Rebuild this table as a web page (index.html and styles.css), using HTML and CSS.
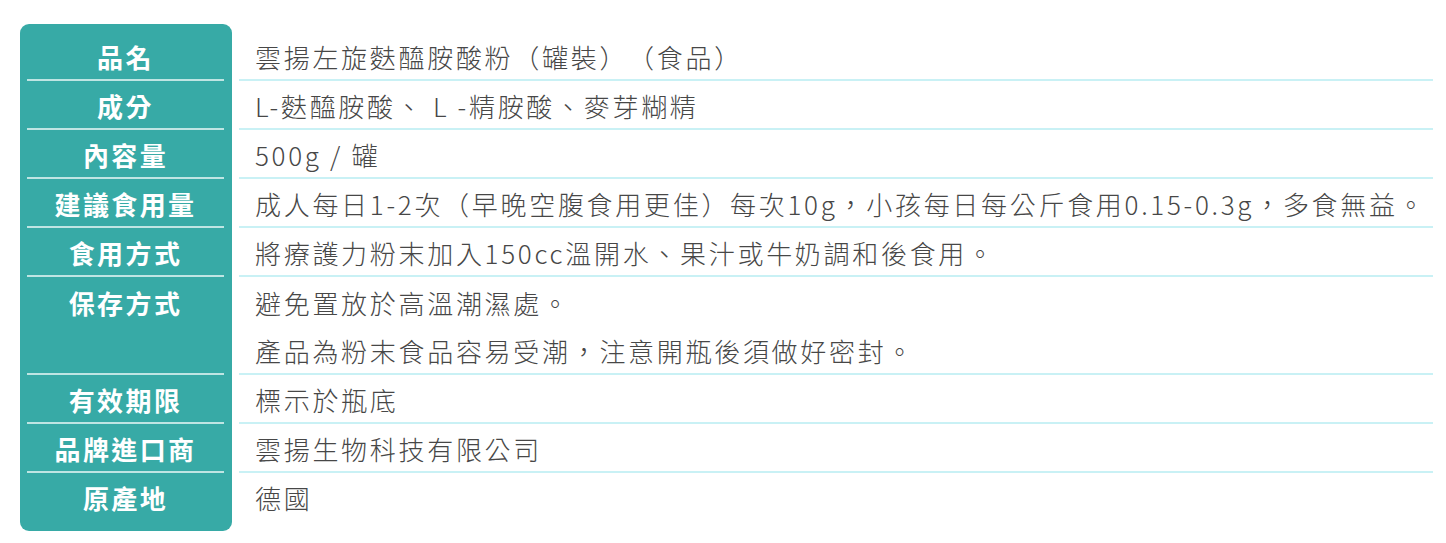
FILE: index.html
```html
<!DOCTYPE html>
<html lang="zh-Hant">
<head>
<meta charset="utf-8">
<title>產品資訊</title>
<link rel="stylesheet" href="styles.css">
</head>
<body>
<div class="spec">
  <div class="labels">
    <div class="cell">品名</div>
    <div class="cell">成分</div>
    <div class="cell">內容量</div>
    <div class="cell">建議食用量</div>
    <div class="cell">食用方式</div>
    <div class="cell tall">保存方式</div>
    <div class="cell">有效期限</div>
    <div class="cell">品牌進口商</div>
    <div class="cell last">原產地</div>
  </div>
  <div class="values">
    <div class="cell">雲揚左旋麩醯胺酸粉（罐裝）（食品）</div>
    <div class="cell">L-麩醯胺酸、 L -精胺酸、麥芽糊精</div>
    <div class="cell">500g / 罐</div>
    <div class="cell">成人每日1-2次（早晚空腹食用更佳）每次10g，小孩每日每公斤食用0.15-0.3g，多食無益。</div>
    <div class="cell">將療護力粉末加入150cc溫開水、果汁或牛奶調和後食用。</div>
    <div class="cell tall">避免置放於高溫潮濕處。<br>產品為粉末食品容易受潮，注意開瓶後須做好密封。</div>
    <div class="cell">標示於瓶底</div>
    <div class="cell">雲揚生物科技有限公司</div>
    <div class="cell last">德國</div>
  </div>
</div>
</body>
</html>
```

FILE: styles.css
```css
html, body {
  margin: 0;
  padding: 0;
  background: #ffffff;
}

body {
  font-family: "Noto Sans CJK TC", "Noto Sans", sans-serif;
}

.spec {
  display: flex;
  align-items: flex-start;
  padding: 24px 13px 0 20px;
}

.labels {
  width: 197px;
  flex: none;
  background: #37aaa6;
  border-radius: 9px;
  padding: 8px 8px 9px 7px;
}

.values {
  flex: 1;
  margin-left: 7px;
  padding-top: 8px;
}

.cell {
  box-sizing: border-box;
  height: 49px;
  padding-top: 2px;
  line-height: 45px;
  font-size: 26px;
  white-space: nowrap;
  text-spacing-trim: space-all;
}

.cell.tall {
  height: 98px;
  line-height: 48px;
}

.labels .cell {
  color: #ffffff;
  font-weight: 700;
  text-align: center;
  letter-spacing: 2.4px;
  border-bottom: 2px solid #bfe5e3;
}

.values .cell {
  color: #474747;
  font-weight: 300;
  letter-spacing: 2.7px;
  padding-left: 16px;
  border-bottom: 2px solid #c9f1f5;
}

.labels .cell.last,
.values .cell.last {
  border-bottom: none;
}
```
